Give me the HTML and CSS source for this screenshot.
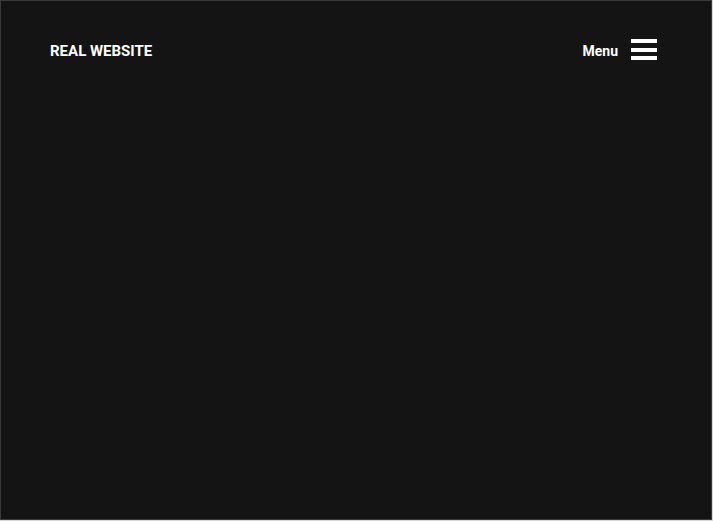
FILE: index.html
```html
<!DOCTYPE html>
<html>
<head>
<meta charset="utf-8">
<link rel="stylesheet" href="styles.css">
</head>
<body>
<div class="page">
  <header class="header">
    <div class="logo">REAL WEBSITE</div>
    <div class="menu">
      <span class="menu-label">Menu</span>
      <span class="burger"><i></i><i></i><i></i></span>
    </div>
  </header>
</div>
</body>
</html>
```
FILE: styles.css
```css
html, body { margin: 0; padding: 0; background: #d8d8d8; }
.page {
  width: 710px;
  height: 518px;
  background: #141414;
  border: 1px solid #3a3a3a;
  font-family: Roboto, "Liberation Sans", sans-serif;
  color: #fff;
}
.header {
  display: flex;
  justify-content: space-between;
  align-items: center;
  padding: 37px 54px 0 49px;
}
.logo { font-weight: 700; font-size: 15px; line-height: 26px; }
.menu { display: flex; align-items: center; gap: 13px; }
.menu-label { font-weight: 700; font-size: 14px; }
.burger { display: flex; flex-direction: column; gap: 4.5px; width: 26px; margin-bottom: 3px; }
.burger i { display: block; height: 4px; background: #fff; }
```
